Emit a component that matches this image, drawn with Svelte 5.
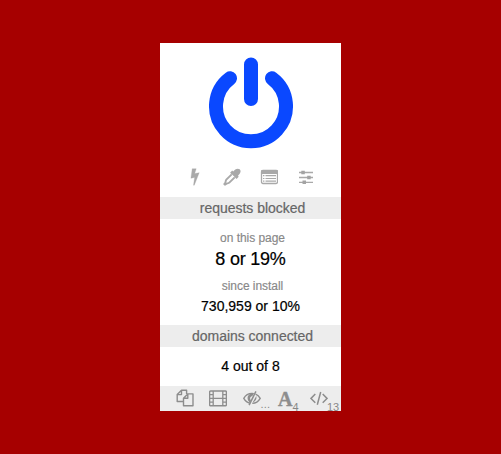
<script>
  const stats = { page: '8 or 19%', total: '730,959 or 10%', domains: '4 out of 8' };
</script>

<main>
  <section class="panel">
    <div class="power">
      <svg width="86" height="93" viewBox="0 0 86 93" fill="none" stroke="#0a48ff" stroke-width="14" stroke-linecap="round">
        <path d="M43 7.500V42M22 21.300A35 35 0 1 0 64 21.300" />
      </svg>
    </div>

    <div class="tools">
      <span><svg width="18" height="18" viewBox="0 0 18 18"><path fill="#a9a9a9" stroke="#a9a9a9" stroke-width=".3" d="M6.200.7H10.200L8.700 5.600 13.200 4.700 8.300 17.200H7.500L8.600 9.500 4.900 10.200Z" /></svg></span>
      <span><svg width="18" height="18" viewBox="0 0 18 18"><path fill="#a9a9a9" d="M10.200 3.600C11.800 1.400 14.500-.3 16.700 1.300c1.900 1.900.5 4.500-1.700 6.400l.7 1.100-2.100 2.100L7.100 4.700 9.200 2.600Z" /><path d="M8.700 6.300 3.300 11.700C2.500 12.500 2.800 13.800 2.400 14.500L1.300 16.100 1.900 16.700 3.500 15.600C4.200 15.200 5.500 15.500 6.300 14.700L11.700 9.300" fill="#fff" stroke="#a9a9a9" stroke-width="1.900" stroke-linejoin="round" /></svg></span>
      <span><svg width="18" height="18" viewBox="0 0 18 18"><rect x="1.500" y="2.500" width="16" height="13" rx="1.400" fill="#fff" stroke="#a9a9a9" stroke-width="1.300" /><path fill="#a9a9a9" d="M1 3Q1 2 2 2H17Q18 2 18 3V6H1Z" /><path d="M3 7.700H4.400M3 10.500H4.400M3 13.200H4.400M5.500 7.700H16M5.500 10.500H16M5.500 13.200H16" stroke="#a9a9a9" stroke-width="1.200" /></svg></span>
      <span><svg width="18" height="18" viewBox="0 0 18 18"><path d="M2 4.500H16M2 9.500H16M2 14.300H16" stroke="#a9a9a9" stroke-width="1.300" /><path d="M4.300 2.700H7.800V6.200H4.300ZM10.200 7.700H13.700V11.200H10.200ZM5.500 12.600H9V16.100H5.500Z" fill="#a3a3a3" /></svg></span>
    </div>

    <h2>requests blocked</h2>
    <p class="label page">on this page</p>
    <p class="value big">{stats.page}</p>
    <p class="label install">since install</p>
    <p class="value total">{stats.total}</p>
    <h2>domains connected</h2>
    <p class="value connected">{stats.domains}</p>

    <footer>
      <span>
        <svg width="18" height="18" viewBox="0 0 18 18" fill="none" stroke="#8d8d8d" stroke-width="1.400" stroke-linejoin="round"><path d="M7.500 12.500H1.200V5.600L5.500 1.300H10.600V5M5.500 1.300V5.600H1.200M7.500 9.200 11.800 4.900H17V16.700H7.500ZM11.800 4.900V9.200H7.500" /></svg>
      </span>
      <span>
        <svg width="18" height="18" viewBox="0 0 18 18" fill="none" stroke="#8d8d8d"><rect x=".6" y="2" width="16.800" height="14.800" rx="1" stroke-width="1.400" /><path stroke-width="1.300" d="M4.200 2V17M13.800 2V17M4 9.400H14M1 5.700H4M1 9.400H4M1 13.100H4M14 5.700H17M14 9.400H17M14 13.100H17" /></svg>
      </span>
      <span>
        <svg width="18" height="18" viewBox="0 0 18 18" fill="none" stroke="#8d8d8d"><path stroke-width="1.400" d="M7.200 14.200C4.300 13.700 2.200 11.900.8 9.400 2.600 6.100 5.500 4.400 9 4.400L10.800 4.600M12.600 5.200C14.600 6 16.100 7.400 17.200 9.400 15.500 12.400 12.800 14.300 9.300 14.400" /><path stroke-width="1.500" d="M12.900 2.400 6.100 16.200" /><path fill="#8d8d8d" stroke="none" d="M10.500 4.600C6.500 4.200 4.400 6.700 4.600 9.400 4.700 11.100 5.600 12.400 7 13.300L8 11.200C6.600 9.800 6.800 7.600 9.600 6.700ZM13.300 7C14 10 12.400 12.600 9.600 13.600Z" /></svg>
        <i class="dots">...</i>
      </span>
      <span><b>A</b><i class="four">4</i></span>
      <span>
        <svg width="18" height="18" viewBox="0 0 18 18" fill="none" stroke="#8d8d8d" stroke-width="1.500"><path d="M5.300 5 1 9.400 5.300 13.800M12.700 5 17 9.400 12.700 13.800M10.700 3 7.300 15.700" /></svg>
        <i class="thirteen">13</i>
      </span>
    </footer>
  </section>
</main>

<style>
  :global(body) { margin: 0; background: #a60000; }
  main { width: 501px; height: 454px; box-sizing: border-box; padding: 43px 0 0 160px; background: #a60000; overflow: hidden; }
  .panel { width: 181px; height: 368px; background: #fff; font-family: "Liberation Sans", Arial, sans-serif; color: #000; text-align: center; display: flex; flex-direction: column; }
  .power { height: 125px; padding: 14px 0 0 48px; box-sizing: border-box; text-align: left; }
  svg { display: block; flex: none; }
  .tools { display: flex; height: 29px; padding-left: 16.5px; align-items: flex-start; }
  .tools span { width: 37px; display: flex; justify-content: center; }
  h2, p { margin: 0; font-weight: 400; white-space: nowrap; }
  h2 { height: 22px; line-height: 23px; background: #ededed; color: #666; font-size: 14px; letter-spacing: -.02px; padding-left: 4px; -webkit-text-stroke: .2px #666; }
  .label { font-size: 12px; color: #888; line-height: 14px; padding-left: 4px; letter-spacing: -.05px; -webkit-text-stroke: .15px #888; }
  .value { -webkit-text-stroke: .2px #000; }
  .page { margin-top: 12px; }
  .big { font-size: 18px; letter-spacing: -.22px; line-height: 20px; margin-top: 4px; }
  .install { margin-top: 10px; }
  .total { font-size: 14px; line-height: 16px; margin: 5px 0 11px; }
  .connected { font-size: 14px; line-height: 16px; margin-top: 11px; }
  footer { margin-top: auto; height: 25px; background: #ededed; display: flex; padding-left: 8px; }
  footer span { position: relative; width: 33.5px; height: 25px; padding-top: 3px; box-sizing: border-box; display: flex; justify-content: center; flex: none; }
  b { font: bold 20px/20px "Liberation Serif", serif; color: #8d8d8d; -webkit-text-stroke: .4px #8d8d8d; }
  i { position: absolute; font-style: normal; font-size: 11px; line-height: 11px; color: #888; top: 16px; }
  .dots { left: 25.500px; top: 13px; letter-spacing: .2px; }
  .four { left: 24px; }
  .thirteen { left: 25px; }
</style>
